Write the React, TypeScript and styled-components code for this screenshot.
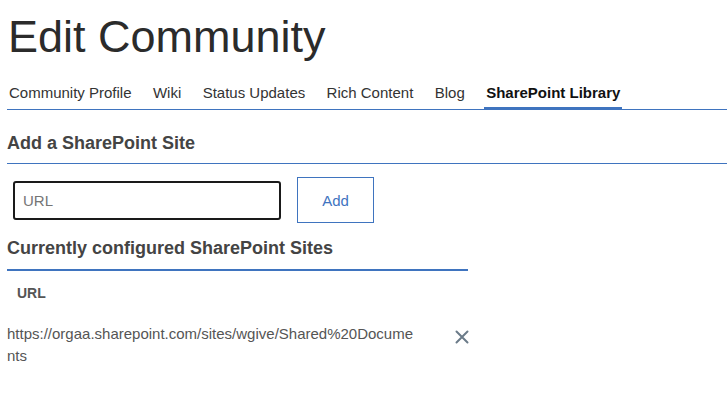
import styled, { createGlobalStyle } from 'styled-components'

const GlobalStyle = createGlobalStyle`
	body {
		margin: 0;
		background: #fff;
		font-family: 'Liberation Sans', Arial, sans-serif;
		color: #333;
	}
`

const tabs = [
	'Community Profile',
	'Wiki',
	'Status Updates',
	'Rich Content',
	'Blog',
	'SharePoint Library',
]

const sites = ['https://orgaa.sharepoint.com/sites/wgive/Shared%20Documents']

const Page = styled.div`
	padding: 0 0 0 7px;
`

const Title = styled.h1`
	margin: 0;
	padding: 11px 0 0 1px;
	font-size: 45px;
	font-weight: 400;
	line-height: 52px;
	color: #2b2b2b;
`

const TabBar = styled.nav`
	display: flex;
	gap: 17.4px;
	margin-top: 20px;
	border-bottom: 1px solid #3f74bf;
`

const Tab = styled.a<{ $active?: boolean }>`
	padding: 1px 2px 5px;
	font-size: 15px;
	line-height: 18px;
	color: ${(p) => (p.$active ? '#111' : '#333')};
	font-weight: ${(p) => (p.$active ? 700 : 400)};
	border-bottom: 3px solid ${(p) => (p.$active ? '#3f74bf' : 'transparent')};
	margin-bottom: -1px;
	cursor: pointer;
`

const Heading = styled.h2<{ $thick?: boolean; $width?: string }>`
	margin: 0;
	width: ${(p) => p.$width || 'auto'};
	padding: ${(p) => (p.$thick ? '15px 0 10px' : '23px 0 9px')};
	font-size: 18px;
	line-height: 21px;
	font-weight: 700;
	color: #444;
	border-bottom: ${(p) => (p.$thick ? '2px' : '1px')} solid #3f74bf;
`

const AddRow = styled.div`
	display: flex;
	align-items: center;
	gap: 16px;
	padding: 13px 0 0 6px;
`

const UrlInput = styled.input`
	box-sizing: border-box;
	width: 268px;
	height: 39px;
	padding: 0 8px;
	border: 2px solid #1a1a1a;
	border-radius: 3px;
	font-family: inherit;
	font-size: 15px;
	color: #333;
	outline: none;
	&::placeholder {
		color: #757575;
	}
`

const AddButton = styled.button`
	box-sizing: border-box;
	width: 77px;
	height: 46px;
	background: #fff;
	border: 1px solid #3f74bf;
	border-radius: 0;
	font-family: inherit;
	font-size: 15px;
	color: #3f74bf;
	cursor: pointer;
`

const SiteTable = styled.table`
	width: 461px;
	border-collapse: collapse;
	font-size: 14px;
	color: #555;
`

const HeadCell = styled.th`
	padding: 13px 10px 9px;
	text-align: left;
	font-weight: 700;
	line-height: 18px;
`

const Cell = styled.td<{ $icon?: boolean }>`
	padding: ${(p) => (p.$icon ? '0 0 0 10px' : '12px 0')};
	width: ${(p) => (p.$icon ? '38px' : 'auto')};
	font-size: 15px;
	line-height: 22px;
	vertical-align: top;
	word-break: break-all;
	color: #555;
`

const RemoveButton = styled.button`
	display: flex;
	margin: 19px -1px 0 auto;
	padding: 0;
	border: 0;
	background: none;
	cursor: pointer;
`

const CloseIcon = () => (
	<svg width="14" height="14" viewBox="0 0 14 14">
		<path
			d="M1.5 1.5 L12.5 12.5 M12.5 1.5 L1.5 12.5"
			stroke="#6b7b89"
			strokeWidth="2"
			strokeLinecap="round"
		/>
	</svg>
)

export default function App() {
	return (
		<Page>
			<GlobalStyle />
			<Title>Edit Community</Title>
			<TabBar>
				{tabs.map((t) => (
					<Tab key={t} $active={t === 'SharePoint Library'}>
						{t}
					</Tab>
				))}
			</TabBar>
			<Heading>Add a SharePoint Site</Heading>
			<AddRow>
				<UrlInput placeholder="URL" />
				<AddButton>Add</AddButton>
			</AddRow>
			<Heading $thick $width="461px">
				Currently configured SharePoint Sites
			</Heading>
			<SiteTable>
				<thead>
					<tr>
						<HeadCell colSpan={2}>URL</HeadCell>
					</tr>
				</thead>
				<tbody>
					{sites.map((s) => (
						<tr key={s}>
							<Cell>{s}</Cell>
							<Cell $icon>
								<RemoveButton aria-label="Remove">
									<CloseIcon />
								</RemoveButton>
							</Cell>
						</tr>
					))}
				</tbody>
			</SiteTable>
		</Page>
	)
}
